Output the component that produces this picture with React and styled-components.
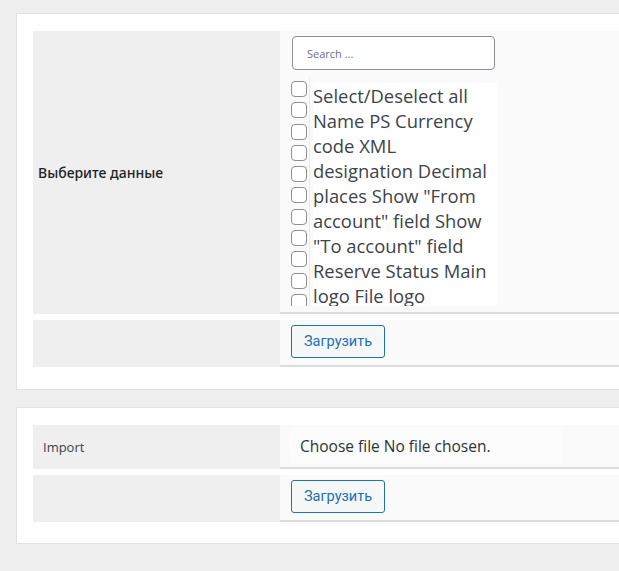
import React from "react";
import styled, { createGlobalStyle } from "styled-components";

const Global = createGlobalStyle`
  html, body { margin: 0; padding: 0; background: #efefef; overflow: hidden; }
  body { font-family: "Open Sans", "Noto Sans", sans-serif; }
`;

const Page = styled.div`
  width: 760px;
  padding: 13px 0 0 16px;
  display: flex;
  flex-direction: column;
  gap: 17px;
`;

const Card = styled.section`
  background: #fff;
  border: 1px solid #e2e2e2;
  padding: ${(p) => p.$pad};
  display: flex;
  flex-direction: column;
  gap: 6px;
`;

const Row = styled.div`
  display: grid;
  grid-template-columns: 247px 1fr;
  height: ${(p) => p.$h}px;
`;

const Label = styled.div`
  background: #efefef;
  display: flex;
  align-items: center;
  padding-left: ${(p) => (p.$small ? 10 : 5)}px;
  font-family: ${(p) => (p.$small ? '"Open Sans", sans-serif' : '"Noto Sans", Roboto, sans-serif')};
  font-size: ${(p) => (p.$small ? 13 : 14)}px;
  font-weight: ${(p) => (p.$small ? 400 : 500)};
  color: ${(p) => (p.$small ? "#3c434a" : "#1d2327")};
`;

const Value = styled.div`
  background: #fafafa;
  border-bottom: 2px solid #dcdcdc;
  padding: ${(p) => p.$pad};
  display: flex;
  flex-direction: column;
  align-items: flex-start;
  overflow: hidden;
`;

const SearchInput = styled.input`
  box-sizing: border-box;
  width: 203px;
  height: 34px;
  margin-left: 1px;
  border: 1px solid #8c8f94;
  border-radius: 4px;
  background: #fff;
  padding: 0 14px;
  font-family: "Open Sans", sans-serif;
  font-size: 11px;
  color: #3c434a;
  outline: none;
  &::placeholder { color: #6f6d88; }
`;

const List = styled.div`
  display: flex;
  height: 228px;
  margin-top: 8px;
  overflow: hidden;
`;

const BoxColumn = styled.div`
  display: flex;
  flex-direction: column;
  gap: 5.3px;
  padding-top: 3px;
  width: 18px;
  border-right: 1px solid #ececec;
`;

const Box = styled.span`
  display: block;
  box-sizing: border-box;
  width: 16px;
  height: 16px;
  flex: none;
  border: 1px solid #8c8f94;
  border-radius: 4px;
  background: #fff;
`;

const ListText = styled.p`
  margin: 5px 0 0 3px;
  width: 184px;
  font-family: "Open Sans", sans-serif;
  font-size: 18.4px;
  line-height: 25px;
  color: #3c434a;
  background: #fff;
`;

const Button = styled.button`
  box-sizing: border-box;
  height: 33px;
  padding: 0 12px;
  border: 1px solid #2271b1;
  border-radius: 3px;
  background: #f6f7f7;
  color: #2271b1;
  font-family: Roboto, "Noto Sans", sans-serif;
  font-size: 14.5px;
  cursor: pointer;
`;

const FileText = styled.div`
  background: #fcfcfc;
  border-radius: 4px;
  padding: 0 72px 0 10px;
  height: 36px;
  display: flex;
  align-items: center;
  font-family: "Open Sans", sans-serif;
  font-size: 15.5px;
  color: #2c3338;
`;

const fields =
  'Select/Deselect all Name PS Currency code XML designation Decimal places Show "From account" field Show "To account" field Reserve Status Main logo File logo';

export default function App() {
  return (
    <>
      <Global />
      <Page>
        <Card $pad="17px 0 22px 16px">
          <Row $h={283}>
            <Label>Выберите данные</Label>
            <Value $pad="5px 0 0 11px">
              <SearchInput placeholder="Search ..." />
              <List>
                <BoxColumn>
                  {Array.from({ length: 11 }).map((_, i) => (
                    <Box key={i} />
                  ))}
                </BoxColumn>
                <ListText>{fields}</ListText>
              </List>
            </Value>
          </Row>
          <Row $h={47}>
            <Label />
            <Value $pad="5px 0 0 11px">
              <Button>Загрузить</Button>
            </Value>
          </Row>
        </Card>
        <Card $pad="17px 0 21px 16px">
          <Row $h={44}>
            <Label $small>Import</Label>
            <Value $pad="3px 0 0 10px">
              <FileText>Choose file No file chosen.</FileText>
            </Value>
          </Row>
          <Row $h={47}>
            <Label />
            <Value $pad="5px 0 0 11px">
              <Button>Загрузить</Button>
            </Value>
          </Row>
        </Card>
      </Page>
    </>
  );
}
